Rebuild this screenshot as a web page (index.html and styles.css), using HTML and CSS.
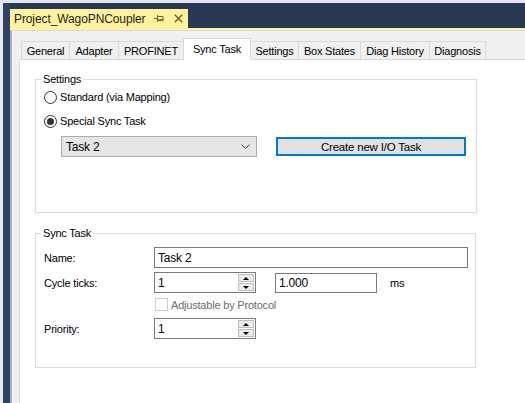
FILE: index.html
```html
<!DOCTYPE html>
<html>
<head>
<meta charset="utf-8">
<link rel="stylesheet" href="styles.css">
</head>
<body>
<div class="app">
  <div class="side"></div>
  <div class="main">
    <div class="docbar">
      <div class="doctab">
        <span class="doctitle">Project_WagoPNCoupler</span>
        <svg class="pin" width="10" height="9" viewBox="0 0 10 9"><path d="M0 4.5H3.5M3.5 1V8M4 2.5H9V6.5H4" fill="none" stroke="#6e653a" stroke-width="1"/><path d="M4 6H9.5" stroke="#6e653a" stroke-width="1.4"/></svg>
        <svg class="close" width="9" height="9" viewBox="0 0 9 9"><path d="M0.8 0.8L8.2 8.2M8.2 0.8L0.8 8.2" stroke="#6e653a" stroke-width="1.5"/></svg>
      </div>
    </div>
    <div class="docline"></div>
    <div class="tabctl">
      <div class="tabstrip">
        <div class="tab">General</div>
        <div class="tab">Adapter</div>
        <div class="tab">PROFINET</div>
        <div class="tab active">Sync Task</div>
        <div class="tab">Settings</div>
        <div class="tab">Box States</div>
        <div class="tab">Diag History</div>
        <div class="tab">Diagnosis</div>
      </div>
      <div class="panel">
        <fieldset class="group g-settings">
          <legend>Settings</legend>
          <div class="radio r1"><span class="rb"></span><span>Standard (via Mapping)</span></div>
          <div class="radio r2"><span class="rb checked"></span><span>Special Sync Task</span></div>
          <div class="taskrow">
            <div class="combo"><span>Task 2</span><svg width="9" height="5" viewBox="0 0 9 5"><path d="M0.5 0.5L4.5 4.5L8.5 0.5" fill="none" stroke="#444" stroke-width="1"/></svg></div>
            <div class="btn">Create new I/O Task</div>
          </div>
        </fieldset>
        <fieldset class="group g-sync">
          <legend>Sync Task</legend>
          <div class="frow f-name">
            <span class="lbl">Name:</span>
            <div class="tbox wide">Task 2</div>
          </div>
          <div class="frow f-cycle">
            <span class="lbl">Cycle ticks:</span>
            <div class="num"><span class="val">1</span><div class="spin"><span class="up"></span><span class="dn"></span></div></div>
            <div class="tbox ms">1.000</div>
            <span class="unit">ms</span>
          </div>
          <div class="frow f-check">
            <span class="lbl"></span>
            <span class="cb"></span><span class="cbtext">Adjustable by Protocol</span>
          </div>
          <div class="frow f-prio">
            <span class="lbl">Priority:</span>
            <div class="num"><span class="val">1</span><div class="spin"><span class="up"></span><span class="dn"></span></div></div>
          </div>
        </fieldset>
      </div>
    </div>
  </div>
</div>
</body>
</html>
```
FILE: styles.css
```css
* { box-sizing: border-box; }
html, body { margin: 0; padding: 0; }
body {
  width: 525px;
  height: 403px;
  overflow: hidden;
  background: #e2e5ed;
  font-family: "Liberation Sans", Arial, sans-serif;
  font-size: 11px;
  letter-spacing: -0.2px;
  color: #000;
}
.app {
  display: flex;
  height: 403px;
  padding-top: 3px;
}
.side {
  width: 10px;
  border-left: 3px solid #e9eaee;
  background: #2f4266;
  flex: none;
}
.main {
  flex: 1;
  display: flex;
  flex-direction: column;
  min-width: 0;
}
.docbar {
  height: 25px;
  background: #293955;
  display: flex;
  align-items: flex-end;
  flex: none;
}
.doctab {
  width: 178px;
  height: 19px;
  background: #fff29d;
  display: flex;
  align-items: center;
  padding: 0 5px 0 4px;
}
.doctitle {
  font-size: 12px;
  color: #1e1e1e;
  letter-spacing: -0.1px;
}
.pin { margin-left: auto; }
.close { margin-left: 10px; }
.docline {
  height: 2px;
  background: #fff29d;
  flex: none;
}
.tabctl {
  flex: 1;
  display: flex;
  flex-direction: column;
  background: #f0f0f0;
  border-left: 2px solid #a9b2c6;
  border-top: 1px solid #dadada;
  padding-left: 7px;
}
.tabstrip {
  height: 28px;
  display: flex;
  align-items: flex-end;
  padding-left: 2px;
  flex: none;
}
.tab {
  height: 18px;
  border: 1px solid #d9d9d9;
  border-bottom: none;
  margin-right: -1px;
  background: #f0f0f0;
  display: flex;
  align-items: center;
  justify-content: center;
  white-space: nowrap;
  padding-top: 1px;
}
.tab:nth-child(1) { width: 49px; }
.tab:nth-child(2) { width: 50px; }
.tab:nth-child(3) { width: 66px; }
.tab:nth-child(4) { width: 68px; }
.tab:nth-child(5) { width: 49px; }
.tab:nth-child(6) { width: 63px; }
.tab:nth-child(7) { width: 70px; }
.tab:nth-child(8) { width: 57px; }
.tab.active {
  height: 22px;
  background: #fff;
  margin-bottom: -1px;
  position: relative;
  z-index: 1;
  padding-top: 0;
  padding-bottom: 2px;
}
.panel {
  flex: 1;
  background: #fff;
  border-top: 1px solid #d9d9d9;
  border-left: 1px solid #d9d9d9;
  padding: 12px 0 0 15px;
}
.group {
  margin: 0;
  padding: 0 0 0 8px;
  border: 1px solid #dcdcdc;
  min-width: 0;
  display: block;
}
.group legend {
  padding: 0 2px;
  margin-left: -3px;
  line-height: 14px;
  height: 14px;
}
.g-settings {
  width: 442px;
  height: 141px;
}
.g-sync {
  width: 441px;
  height: 142px;
  margin-top: 13px;
}
.radio {
  display: flex;
  align-items: center;
  height: 16px;
}
.r1 { margin-top: 3px; }
.r2 { margin-top: 8px; }
.rb {
  width: 13px;
  height: 13px;
  border: 1px solid #333;
  border-radius: 50%;
  background: #fff;
  margin-right: 3px;
  display: flex;
  align-items: center;
  justify-content: center;
  flex: none;
}
.rb.checked::after {
  content: "";
  width: 7px;
  height: 7px;
  border-radius: 50%;
  background: #333;
}
.taskrow {
  display: flex;
  align-items: center;
  margin-top: 7px;
}
.combo {
  margin-left: 17px;
  width: 196px;
  height: 21px;
  background: #e5e5e5;
  border: 1px solid #adadad;
  display: flex;
  align-items: center;
  justify-content: space-between;
  padding: 0 6px 0 4px;
  font-size: 12px;
}
.btn {
  margin-left: 19px;
  width: 190px;
  height: 19px;
  background: #e1e1e1;
  border: 2px solid #0078d7;
  display: flex;
  align-items: center;
  justify-content: center;
  font-size: 11.5px;
}
.frow {
  display: flex;
  align-items: center;
}
.lbl {
  width: 110px;
  flex: none;
}
.f-name { margin-top: 7px; }
.f-cycle { margin-top: 4px; }
.f-check { margin-top: 5px; height: 13px; }
.f-prio { margin-top: 7px; }
.tbox {
  height: 21px;
  border: 1px solid #7a7a7a;
  display: flex;
  align-items: center;
  padding-left: 3px;
  font-size: 12px;
}
.tbox.wide { width: 314px; }
.tbox.ms { width: 102px; height: 20px; margin-left: 19px; }
.unit { margin-left: 13px; }
.num {
  width: 102px;
  height: 21px;
  border: 1px solid #7a7a7a;
  display: flex;
  align-items: center;
  padding: 1px;
  font-size: 12px;
}
.num .val { flex: 1; padding-left: 2px; }
.spin {
  width: 16px;
  height: 17px;
  display: flex;
  flex-direction: column;
  justify-content: space-between;
}
.spin span {
  height: 8px;
  border: 1px solid #bdbdbd;
  background: #ececec;
  display: flex;
  align-items: center;
  justify-content: center;
}
.spin .up::after {
  content: "";
  border-left: 3px solid transparent;
  border-right: 3px solid transparent;
  border-bottom: 3px solid #000;
}
.spin .dn::after {
  content: "";
  border-left: 3px solid transparent;
  border-right: 3px solid transparent;
  border-top: 3px solid #000;
}
.cb {
  width: 13px;
  height: 13px;
  border: 1px solid #cccccc;
  margin-left: 1px;
  flex: none;
}
.cbtext {
  margin-left: 3px;
  color: #6d6d6d;
}
```
